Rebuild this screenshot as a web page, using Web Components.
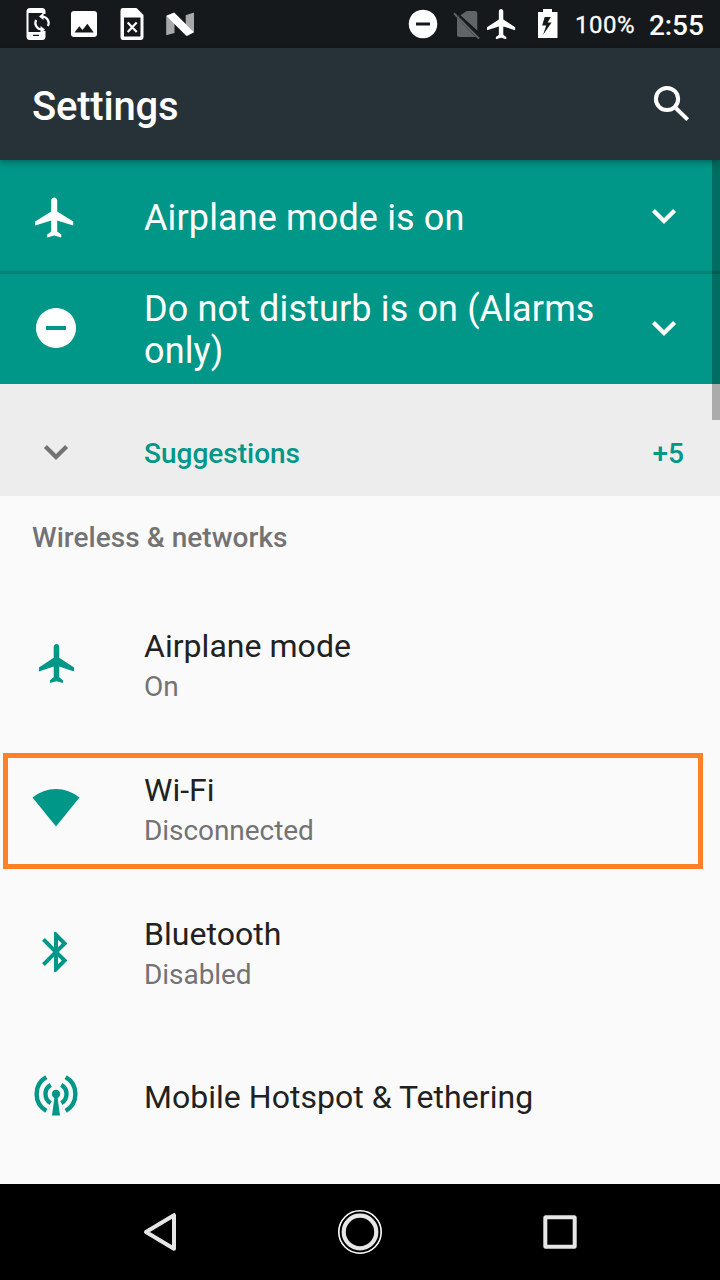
<!DOCTYPE html>
<html lang="en">
<head>
<meta charset="utf-8">
<title>Settings</title>
<style>
html,body{margin:0;padding:0}
body{width:720px;height:1280px;overflow:hidden;background:#fafafa;font-family:Roboto,"Noto Sans",sans-serif}
</style>
</head>
<body>
<settings-screen></settings-screen>
<script>
const PLANE='M21 16v-2l-8-5V3.5c0-.83-.67-1.5-1.5-1.5S10 2.67 10 3.5V9l-8 5v2l8-2.5V19l-2 1.5V22l3.5-1 3.5 1v-1.5L13 19v-5.5l8 2.5z';
const ICONS={
 sync:['12 0 48 48','<path fill-rule="evenodd" d="M30 8h12q3.500 0 3.500 3.500v2.500h-3v-1H28.500v19H42.500v-1h3v5.500q0 3.500-3.500 3.500H30q-3.500 0-3.500-3.500v-25Q26.500 8 30 8zM33 34.800h6v1.300h-6z"/><g fill="none" stroke="currentColor" stroke-width="2.200"><path d="M42 16.500A6.500 6.500 0 0 1 47.900 26M42 29.500A6.500 6.500 0 0 1 36.100 20"/></g><path d="M43.500 12.800v7.200l-4.500-3.600zM40.500 26v7.200l4.500-3.600z"/>'],
 image:['60 0 48 48','<path fill-rule="evenodd" d="M74 11h20q3 0 3 3v20q0 3-3 3H74q-3 0-3-3V14q0-3 3-3zM74.500 32.500h19.200L87.400 23.800 82.500 30.100 79.300 26.200z"/>'],
 simerr:['108 0 48 48','<path fill-rule="evenodd" d="M123 8h13.500l7 7v22q0 3-3 3h-17.500q-2.500 0-2.500-3V11q0-3 2.500-3zM124 17.500v19h16.500v-19z"/><path fill="none" stroke="currentColor" stroke-width="2.200" d="M127.700 22.500l9 9.500M136.700 22.500l-9 9.500"/>'],
 nougat:['156 0 48 48','<path fill="#a6a8a9" d="M166.200 15.800l8.300 6v11.200l-8.300 2.300zM194 12.500v20l-8.300-6v-11.300z"/><path d="M166.200 15.800l8-3.300 19.800 19.800-6.500 3.400q-1 .3-1.800-.5z"/>'],
 dnd:['399 0 48 48','<path fill-rule="evenodd" d="M423 9.700a14.300 14.300 0 1 0 .01 0zM416 22.500h14v3h-14z"/>'],
 nosim:['447 0 38 48','<g fill="#616466"><path d="M466.800 11h8q2.500 0 2.500 2.500V30.500L460.400 15.300zM457 17.500L475.800 37H459.500Q457 37 457 34.500z"/><path d="M454.800 12.800L479.800 38 478.300 39.300 453.300 14z"/></g>'],
 planes:['485 0 40 48',`<path transform="translate(484.050 6) scale(1.480 1.510)" d="${PLANE}"/>`],
 battery:['525 0 45 48','<path fill-rule="evenodd" d="M543 9h9v3h5.500v26H538V12h5zM544.700 17l-2.500 8.500h4l-3.200 9.500 8.600-12.500h-4l3.200-5.500z"/>'],
 search:['648 80 48 48','<g fill="none" stroke="currentColor" stroke-width="4"><circle cx="667" cy="99" r="11.100"/><path d="M676 108.300l11.700 11.300"/></g>'],
 planeb:['32 192 48 48',`<path transform="translate(31.200 193.600) scale(2)" d="${PLANE}"/>`],
 dndb:['32 304 48 48','<path fill-rule="evenodd" d="M56 308a20 20 0 1 0 .01 0zM46 326h20v4h-20z"/>'],
 down:['640 192 48 48','<path fill="none" stroke="currentColor" stroke-width="4.200" d="M653.400 210.400L664 221l10.600-10.600"/>'],
 plane:['32 640 48 48',`<path transform="translate(35.200 640.200) scale(1.850 1.950)" d="${PLANE}"/>`],
 wifi:['32 784 48 48','<path d="M56 826.500L32.500 797.500A36.700 36.700 0 0 1 79.500 797.500z"/>'],
 bt:['32 928 48 48','<path transform="translate(32 928) scale(2)" d="M17.710 7.710L12 2h-1v7.590L6.410 5 5 6.410 10.590 12 5 17.590 6.410 19 11 14.410V22h1l5.710-5.710-4.300-4.290 4.300-4.290zM13 5.830l1.880 1.880L13 9.590V5.830zm1.880 10.460L13 18.170v-3.760l1.880 1.880z"/>'],
 hotspot:['32 1072 48 48','<circle cx="56" cy="1094" r="4.200"/><path d="M54.500 1097h3l2.500 18.500h-8z"/><g fill="none" stroke="currentColor" stroke-width="4.400"><path d="M46.300 1077.200a19.400 19.400 0 0 0 0 33.600M65.700 1077.200a19.400 19.400 0 0 1 0 33.600M50.700 1084.800a10.700 10.700 0 0 0 0 18.400M61.300 1084.800a10.700 10.700 0 0 1 0 18.400"/></g>'],
 back:['136 1208 48 48','<path fill="none" stroke="currentColor" stroke-width="4" stroke-linejoin="round" d="M146 1232l28-16.800v33.600z"/>'],
 home:['336 1208 48 48','<g fill="none"><circle cx="360" cy="1232" r="21.200" stroke="#fff" stroke-width="1.600"/><circle cx="360" cy="1232" r="16.300" stroke="currentColor" stroke-width="4.200"/></g>'],
 recent:['536 1208 48 48','<rect x="545.300" y="1217.300" width="29.400" height="29.400" rx=".5" fill="none" stroke="currentColor" stroke-width="4" stroke-linejoin="round"/>']
};
function define(name,markup){
  const t=document.createElement('template');
  t.innerHTML=markup;
  customElements.define(name,class extends HTMLElement{
    constructor(){super();this.attachShadow({mode:'open'}).append(t.content.cloneNode(true));}
  });
}
customElements.define('ui-icon',class extends HTMLElement{
  connectedCallback(){
    if(this.shadowRoot)return;
    const [box,body]=ICONS[this.getAttribute('name')];
    const [,,w,h]=box.split(' ');
    this.attachShadow({mode:'open'}).innerHTML=`<style>:host{display:block;flex:none;width:${w}px;height:${h}px}svg{display:block}</style><svg width="${w}" height="${h}" viewBox="${box}" fill="currentColor">${body}</svg>`;
  }
});
define('status-bar',`<style>
:host{display:flex;height:48px;box-sizing:border-box;padding:0 16px 0 12px;background:#15191c;color:#fff;align-items:center}
.grow{flex:1}
.pct{font-size:24px;line-height:48px;width:59px;margin:2px 15px 0 5px;letter-spacing:.5px;white-space:nowrap;-webkit-text-stroke:.3px #fff}
.time{font-size:28px;font-weight:500;line-height:48px;width:55px;margin-top:3px;letter-spacing:-.1px;white-space:nowrap}
</style><ui-icon name="sync"></ui-icon><ui-icon name="image"></ui-icon><ui-icon name="simerr"></ui-icon><ui-icon name="nougat"></ui-icon><span class="grow"></span><ui-icon name="dnd"></ui-icon><ui-icon name="nosim"></ui-icon><ui-icon name="planes"></ui-icon><ui-icon name="battery"></ui-icon><span class="pct">100%</span><span class="time">2:55</span>`);
define('app-bar',`<style>
:host{display:flex;height:112px;box-sizing:border-box;padding:0 24px 0 32px;background:#273238;color:#fff;align-items:center;justify-content:space-between;position:relative;z-index:2;box-shadow:0 2px 7px rgba(0,0,0,.35)}
.t{font-size:40px;font-weight:500;line-height:48px;padding-top:6px;letter-spacing:-.2px}
</style><span class="t"><slot></slot></span><ui-icon name="search"></ui-icon>`);
define('condition-card',`<style>
:host{display:flex;height:112px;box-sizing:border-box;padding:0 32px;background:#009788;color:#fff;align-items:center}
.t{flex:1;margin-left:64px;margin-right:24px;font-size:36px;line-height:42px;padding-top:3px;letter-spacing:.13px}
</style><slot name="icon"></slot><span class="t"><slot></slot></span><ui-icon name="down"></ui-icon>`);
define('suggestion-header',`<style>
:host{display:flex;height:112px;box-sizing:border-box;padding:24px 36px 0 32px;background:#ededed;align-items:center;color:#009788;font-size:28px;font-weight:500}
ui-icon{color:#737373}
.t{flex:1;margin-left:64px;padding-top:3px}.n{padding-top:3px}
</style><ui-icon name="down"></ui-icon><span class="t"><slot></slot></span><span class="n"><slot name="count"></slot></span>`);
define('section-label',`<style>
:host{display:flex;height:96px;box-sizing:border-box;padding:25px 32px 0;font-size:28px;line-height:34px;font-weight:500;letter-spacing:.04px;color:#737373}
</style><slot></slot>`);
define('setting-row',`<style>
:host{display:flex;position:relative;height:144px;box-sizing:border-box;padding:0 32px;align-items:center;color:#212121}
::slotted(ui-icon){color:#009788}
.c{display:flex;flex-direction:column;margin-left:64px;padding-top:2px}
.t{font-size:32px;line-height:38px;letter-spacing:.03px}
::slotted([slot=summary]){font-size:28px;line-height:34px;padding-top:5px;letter-spacing:-.06px;color:#737373}
:host([marked])::after{content:"";position:absolute;left:3px;top:17px;width:700px;height:116px;box-sizing:border-box;border:5px solid #ff8127}
</style><slot name="icon"></slot><div class="c"><span class="t"><slot></slot></span><slot name="summary"></slot></div>`);
define('nav-bar',`<style>
:host{display:flex;height:96px;box-sizing:border-box;padding:0 136px;background:#000;color:#e6e6e6;align-items:center;justify-content:space-between}
</style><ui-icon name="back"></ui-icon><ui-icon name="home"></ui-icon><ui-icon name="recent"></ui-icon>`);
define('settings-screen',`<style>
:host{display:flex;flex-direction:column;width:720px;height:1280px}
main{position:relative;flex:1;min-height:0;overflow:hidden;background:#fafafa}
.bar{position:absolute;right:0;top:0;width:8px;height:260px;background:rgba(0,0,0,.28)}
.line{height:4px;margin-top:-2px;position:relative;background:linear-gradient(#048f81 1px,#058377 1px);margin-bottom:-2px}
</style>
<status-bar></status-bar><app-bar>Settings</app-bar>
<main>
<condition-card><ui-icon slot="icon" name="planeb"></ui-icon>Airplane mode is on</condition-card>
<div class="line"></div>
<condition-card><ui-icon slot="icon" name="dndb"></ui-icon>Do not disturb is on (Alarms only)</condition-card>
<suggestion-header>Suggestions<span slot="count">+5</span></suggestion-header>
<section-label>Wireless &amp; networks</section-label>
<setting-row><ui-icon slot="icon" name="plane"></ui-icon>Airplane mode<span slot="summary">On</span></setting-row>
<setting-row marked><ui-icon slot="icon" name="wifi"></ui-icon>Wi-Fi<span slot="summary">Disconnected</span></setting-row>
<setting-row><ui-icon slot="icon" name="bt"></ui-icon>Bluetooth<span slot="summary">Disabled</span></setting-row>
<setting-row><ui-icon slot="icon" name="hotspot"></ui-icon>Mobile Hotspot &amp; Tethering</setting-row>
<div class="bar"></div>
</main>
<nav-bar></nav-bar>`);
</script>
</body>
</html>
